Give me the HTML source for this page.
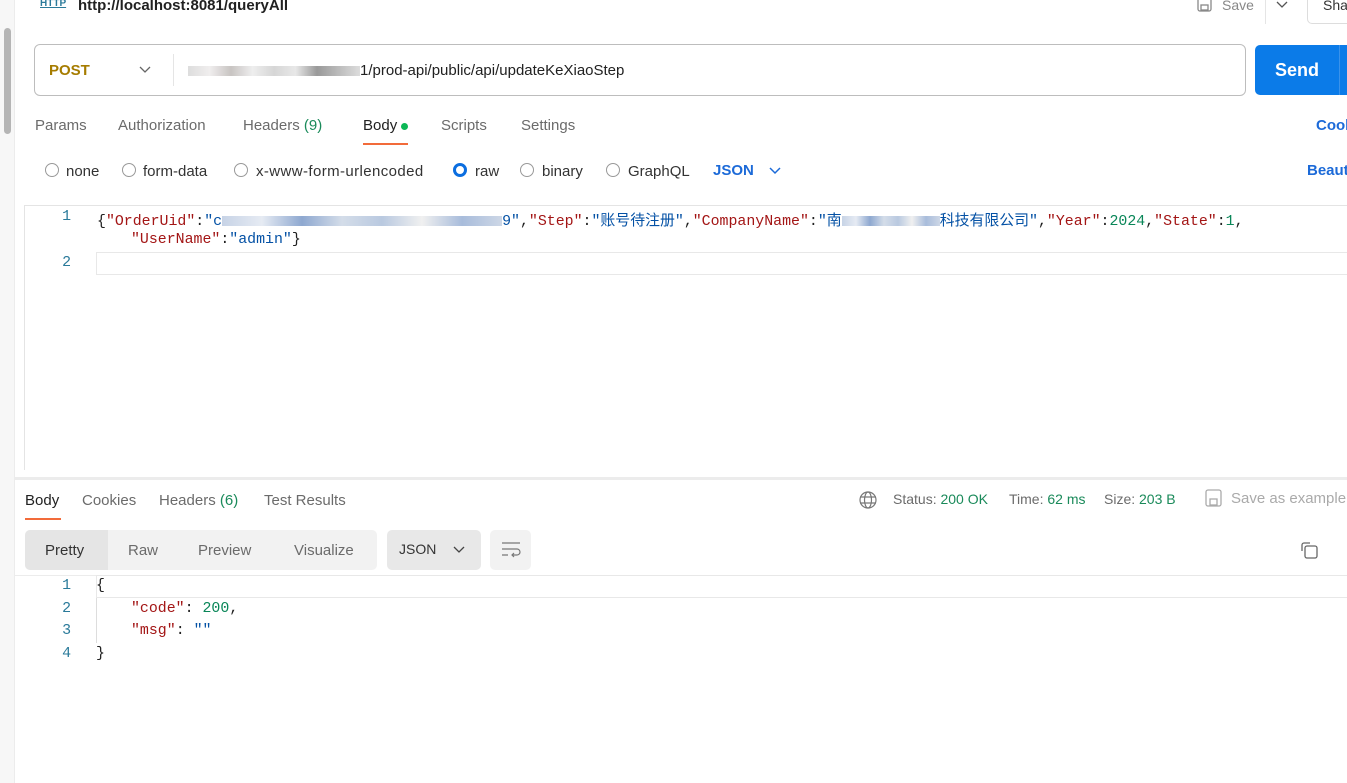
<!DOCTYPE html>
<html><head><meta charset="utf-8"><style>
*{margin:0;padding:0;box-sizing:border-box}
body{width:1347px;height:783px;overflow:hidden;background:#fff;font-family:"Liberation Sans","Noto Sans CJK SC",sans-serif;color:#212121;position:relative;font-size:14px}
.a{position:absolute;white-space:nowrap}
.g{color:#6b6b6b}
.m{font-family:"Liberation Mono","Noto Sans CJK SC",monospace;font-size:14.9px}
.k{color:#a31515}.s{color:#0451a5}.n{color:#098658}
.ln{color:#2a7a9a;width:20px;text-align:right}
.rad{position:absolute;width:14px;height:14px;border:1px solid #999;border-radius:50%}
.blur{display:inline-block;height:10px;background:linear-gradient(90deg,#c7d3e6,#e6ebf3,#8ea8d0,#d4dde9,#b9c9e0,#f0f0f0,#a8bcdb,#cdd7e6);vertical-align:middle}
</style></head><body>
<div class="a" style="left:0;top:0;width:15px;height:783px;background:#f7f7f7;border-right:1px solid #ececec"></div>
<div class="a" style="left:4px;top:28px;width:7px;height:106px;background:#b5b5b5;border-radius:4px"></div>
<div class="a" style="left:40px;top:-2px;font-size:10px;color:#2b7a9a;font-weight:bold;text-decoration:underline">HTTP</div>
<div class="a" style="left:78px;top:-3px;font-size:15px;color:#212121;font-weight:bold">http://localhost:8081/queryAll</div>
<svg class="a" style="left:1196px;top:-4px" width="18" height="18"><rect x="2" y="2" width="13" height="13" rx="2" fill="none" stroke="#888" stroke-width="1.3"/><rect x="5" y="9" width="7" height="5" fill="none" stroke="#888" stroke-width="1.3"/></svg>
<div class="a g" style="left:1222px;top:-3px;font-size:14px;color:#888">Save</div>
<div class="a" style="left:1265px;top:0;width:1px;height:24px;background:#e5e5e5"></div>
<svg class="a" style="left:1275px;top:0" width="14" height="10"><path d="M2 2l5 5 5-5" fill="none" stroke="#555" stroke-width="1.3"/></svg>
<div class="a" style="left:1307px;top:-10px;width:60px;height:34px;border:1px solid #ddd;border-radius:5px"></div>
<div class="a" style="left:1323px;top:-3px;color:#333">Sha</div>
<div class="a" style="left:34px;top:44px;width:1212px;height:52px;border:1px solid #bdbdbd;border-radius:6px"></div>
<div class="a" style="left:49px;top:62px;color:#a67c00;font-weight:bold;font-size:15px">POST</div>
<svg class="a" style="left:138px;top:65px" width="14" height="10"><path d="M2 2l5 5 5-5" fill="none" stroke="#666" stroke-width="1.3"/></svg>
<div class="a" style="left:173px;top:54px;width:1px;height:32px;background:#e5e5e5"></div>
<div class="a" style="left:188px;top:62px;color:#212121;font-size:15px"><span class="blur" style="width:172px;background:linear-gradient(90deg,#ddd,#f0eeee,#c8c4c2,#eee,#d6d6d6,#e8e8e8,#999,#bbb,#ddd)"></span>1/prod-api/public/api/updateKeXiaoStep</div>
<div class="a" style="left:1255px;top:45px;width:100px;height:50px;background:#0b7be8;border-radius:5px"></div>
<div class="a" style="left:1275px;top:60px;color:#fff;font-weight:bold;font-size:18px">Send</div>
<div class="a" style="left:1339px;top:45px;width:1px;height:50px;background:#3a92ea"></div>
<div class="a g" style="left:35px;top:117px;font-size:15px">Params</div>
<div class="a g" style="left:118px;top:117px;font-size:15px">Authorization</div>
<div class="a g" style="left:243px;top:117px;font-size:15px">Headers <span style="color:#1a8a5a">(9)</span></div>
<div class="a" style="left:363px;top:117px;font-size:15px">Body <span style="display:inline-block;width:7px;height:7px;border-radius:50%;background:#0cb856;vertical-align:middle"></span></div>
<div class="a" style="left:363px;top:143px;width:45px;height:2px;background:#f26b3a"></div>
<div class="a g" style="left:441px;top:117px;font-size:15px">Scripts</div>
<div class="a g" style="left:521px;top:117px;font-size:15px">Settings</div>
<div class="a" style="left:1316px;top:117px;color:#1c6ad8;font-weight:bold;font-size:15px">Cook</div>
<div class="rad" style="left:45px;top:163px"></div><div class="a" style="left:66px;top:163px;color:#333;font-size:15px">none</div>
<div class="rad" style="left:122px;top:163px"></div><div class="a" style="left:143px;top:163px;color:#333;font-size:15px">form-data</div>
<div class="rad" style="left:234px;top:163px"></div><div class="a" style="left:256px;top:163px;color:#333;font-size:15px;letter-spacing:0.4px">x-www-form-urlencoded</div>
<div class="rad" style="left:453px;top:163px;border:3.5px solid #0b6ee0"></div><div class="a" style="left:475px;top:163px;color:#333;font-size:15px">raw</div>
<div class="rad" style="left:520px;top:163px"></div><div class="a" style="left:542px;top:163px;color:#333;font-size:15px">binary</div>
<div class="rad" style="left:606px;top:163px"></div><div class="a" style="left:628px;top:163px;color:#333;font-size:15px">GraphQL</div>
<div class="a" style="left:713px;top:162px;color:#1c6ad8;font-weight:bold;font-size:15px">JSON</div>
<svg class="a" style="left:768px;top:166px" width="14" height="10"><path d="M2 2l5 5 5-5" fill="none" stroke="#1c6ad8" stroke-width="1.5"/></svg>
<div class="a" style="left:1307px;top:162px;color:#1c6ad8;font-weight:bold;font-size:15px">Beaut</div>
<div class="a" style="left:24px;top:205px;width:1330px;height:1px;background:#e4e4e4"></div>
<div class="a" style="left:24px;top:205px;width:1px;height:265px;background:#e4e4e4"></div>
<div class="a m ln" style="left:51px;top:209px">1</div>
<div class="a m" style="left:97px;top:209px">{<span class="k">"OrderUid"</span>:<span class="s">"c<span class="blur" style="width:280px"></span>9"</span>,<span class="k">"Step"</span>:<span class="s">"账号待注册"</span>,<span class="k">"CompanyName"</span>:<span class="s">"南<span class="blur" style="width:98px"></span>科技有限公司"</span>,<span class="k">"Year"</span>:<span class="n">2024</span>,<span class="k">"State"</span>:<span class="n">1</span>,</div>
<div class="a m" style="left:131px;top:232px"><span class="k">"UserName"</span>:<span class="s">"admin"</span>}</div>
<div class="a" style="left:96px;top:252px;width:1260px;height:23px;border:1px solid #e8e8e8;border-right:none"></div>
<div class="a m ln" style="left:51px;top:255px">2</div>
<div class="a" style="left:15px;top:477px;width:1340px;height:3px;background:#ececec"></div>
<div class="a" style="left:25px;top:492px;font-size:15px">Body</div>
<div class="a" style="left:25px;top:518px;width:36px;height:2px;background:#f26b3a"></div>
<div class="a g" style="left:82px;top:492px;font-size:15px">Cookies</div>
<div class="a g" style="left:159px;top:492px;font-size:15px">Headers <span style="color:#1a8a5a">(6)</span></div>
<div class="a g" style="left:264px;top:492px;font-size:15px">Test Results</div>
<svg class="a" style="left:858px;top:490px" width="20" height="20"><circle cx="10" cy="10" r="8" fill="none" stroke="#777" stroke-width="1.2"/><ellipse cx="10" cy="10" rx="3.5" ry="8" fill="none" stroke="#777" stroke-width="1.2"/><path d="M2 7h16M2 13h16" stroke="#777" stroke-width="1.2"/></svg>
<div class="a g" style="left:893px;top:491px">Status: <span style="color:#1a8a5a">200 OK</span></div>
<div class="a g" style="left:1009px;top:491px">Time: <span style="color:#1a8a5a">62 ms</span></div>
<div class="a g" style="left:1104px;top:491px">Size: <span style="color:#1a8a5a">203 B</span></div>
<svg class="a" style="left:1204px;top:488px" width="20" height="20"><rect x="2" y="2" width="15" height="16" rx="2" fill="none" stroke="#aaa" stroke-width="1.3"/><rect x="6" y="11" width="7" height="6" fill="none" stroke="#aaa" stroke-width="1.3"/></svg>
<div class="a" style="left:1231px;top:490px;color:#aaa;font-size:15px">Save as example</div>
<div class="a" style="left:25px;top:530px;width:352px;height:40px;background:#f2f2f2;border-radius:5px"></div>
<div class="a" style="left:25px;top:530px;width:83px;height:40px;background:#e5e5e5;border-radius:5px 0 0 5px"></div>
<div class="a" style="left:45px;top:542px;font-size:15px;color:#333">Pretty</div>
<div class="a g" style="left:128px;top:542px;font-size:15px">Raw</div>
<div class="a g" style="left:198px;top:542px;font-size:15px">Preview</div>
<div class="a g" style="left:294px;top:542px;font-size:15px">Visualize</div>
<div class="a" style="left:387px;top:530px;width:94px;height:40px;background:#e8e8e8;border-radius:5px"></div>
<div class="a" style="left:399px;top:541px;font-size:14px;color:#333">JSON</div>
<svg class="a" style="left:452px;top:545px" width="14" height="10"><path d="M2 2l5 5 5-5" fill="none" stroke="#444" stroke-width="1.3"/></svg>
<div class="a" style="left:490px;top:530px;width:41px;height:40px;background:#f2f2f2;border-radius:5px"></div>
<svg class="a" style="left:500px;top:540px" width="22" height="20"><path d="M2 3h18M2 9h15a3 3 0 010 6h-5M14 13l-2 2 2 2M2 15h6" fill="none" stroke="#777" stroke-width="1.2"/></svg>
<svg class="a" style="left:1299px;top:540px" width="22" height="22"><path d="M3 11V5a2 2 0 012-2h6" fill="none" stroke="#666" stroke-width="1.3"/><rect x="6" y="6" width="12" height="12" rx="2" fill="none" stroke="#666" stroke-width="1.3"/></svg>
<div class="a" style="left:15px;top:575px;width:1340px;height:1px;background:#ececec"></div>
<div class="a" style="left:96px;top:575px;width:1260px;height:23px;border:1px solid #e8e8e8;border-right:none"></div>
<div class="a" style="left:96px;top:598px;width:1px;height:45px;background:#ddd"></div>
<div class="a m ln" style="left:51px;top:578px">1</div><div class="a m" style="left:96px;top:578px">{</div>
<div class="a m ln" style="left:51px;top:601px">2</div><div class="a m" style="left:131px;top:601px"><span class="k">"code"</span>: <span class="n">200</span>,</div>
<div class="a m ln" style="left:51px;top:623px">3</div><div class="a m" style="left:131px;top:623px"><span class="k">"msg"</span>: <span class="s">""</span></div>
<div class="a m ln" style="left:51px;top:646px">4</div><div class="a m" style="left:96px;top:646px">}</div>
</body></html>
